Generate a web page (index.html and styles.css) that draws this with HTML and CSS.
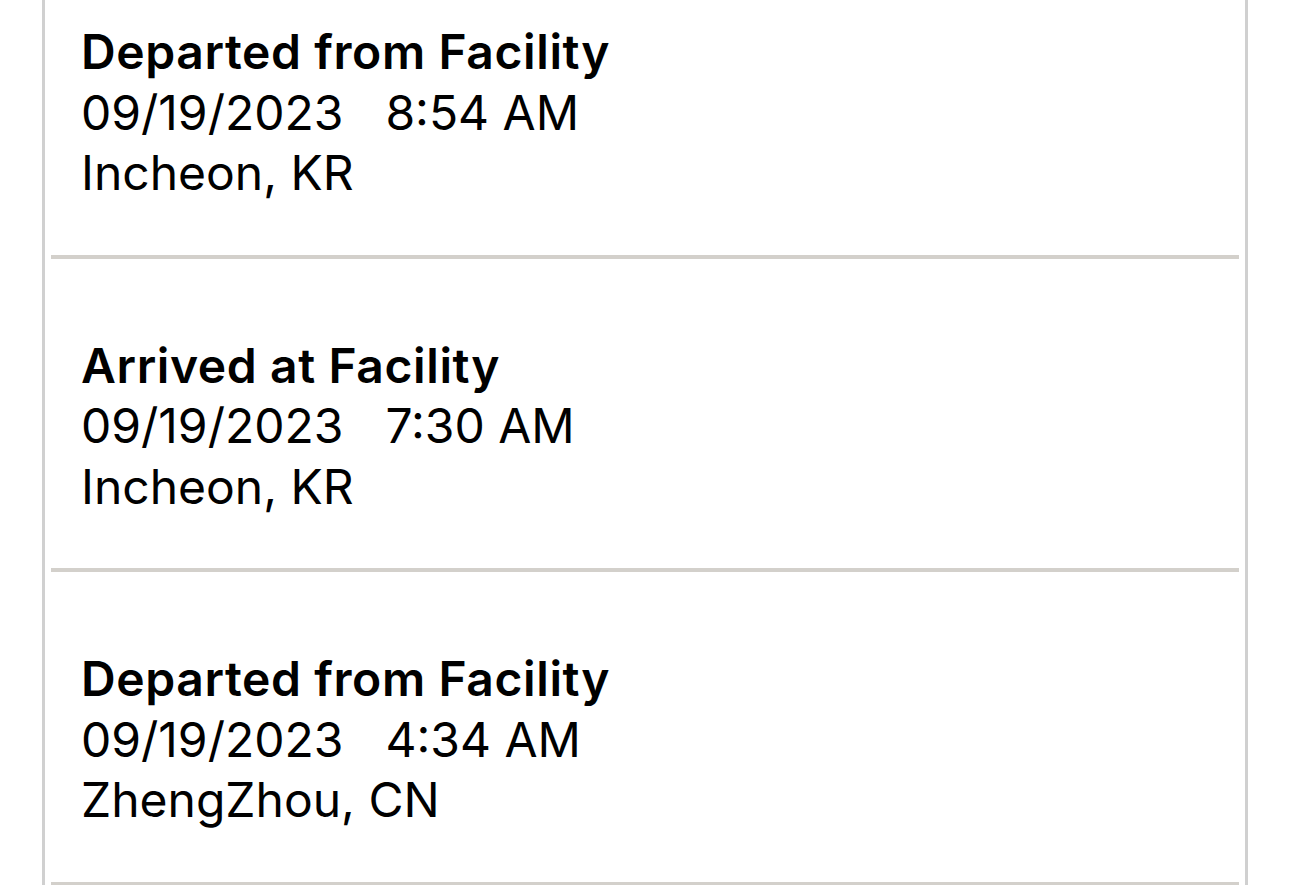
FILE: index.html
```html
<!DOCTYPE html>
<html lang="en">
<head>
<meta charset="utf-8">
<title>Tracking history</title>
<link rel="stylesheet" href="styles.css">
</head>
<body>
<div class="card">
  <div class="entry">
    <div class="status">Departed from Facility</div>
    <div class="when"><span class="date">09/19/2023</span><span class="time">8:54 AM</span></div>
    <div class="place">Incheon, KR</div>
  </div>
  <div class="entry">
    <div class="status">Arrived at Facility</div>
    <div class="when"><span class="date">09/19/2023</span><span class="time">7:30 AM</span></div>
    <div class="place">Incheon, KR</div>
  </div>
  <div class="entry">
    <div class="status">Departed from Facility</div>
    <div class="when"><span class="date">09/19/2023</span><span class="time">4:34 AM</span></div>
    <div class="place">ZhengZhou, CN</div>
  </div>
</div>
</body>
</html>
```

FILE: styles.css
```css
html, body {
  margin: 0;
  padding: 0;
  background: #ffffff;
  overflow: hidden;
}
body {
  font-family: Inter, "Noto Sans", sans-serif;
  color: #000000;
  height: 885px;
}
.card {
  margin: -55px 0 0 42px;
  width: 1200px;
  border-left: 3px solid #d0d0d0;
  border-right: 3px solid #d0d0d0;
  display: flex;
  flex-direction: column;
}
.entry {
  margin: 0 6px;
  padding: 77px 0 51px 30px;
  border-bottom: 4px solid #d3d0cb;
  font-size: 48px;
  line-height: 60.5px;
}
.status {
  font-weight: 600;
  letter-spacing: 0.6px;
}
.when {
  display: flex;
}
.date {
  margin-right: 42px;
}
```
